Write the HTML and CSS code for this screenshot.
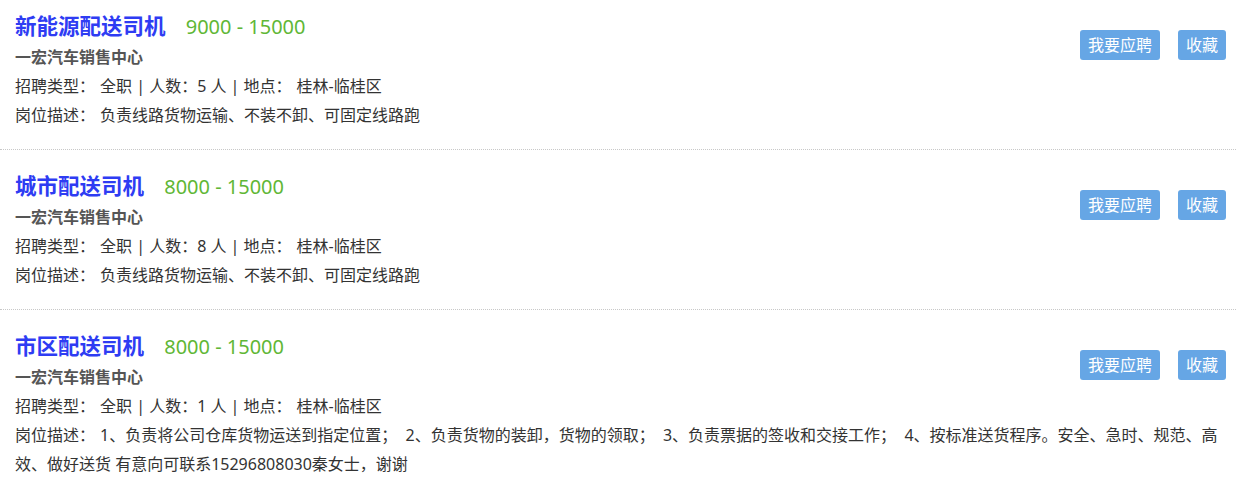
FILE: index.html
```html
<!DOCTYPE html>
<html lang="zh-CN">
<head>
  <meta charset="UTF-8" />
  <title>招聘信息</title>
  <link rel="stylesheet" href="styles.css">
</head>
<body>

  <div class="job-list">

    <!-- 新能源配送司机 -->
    <div class="job">
      <div class="actions">
        <button class="btn">我要应聘</button>
        <button class="btn">收藏</button>
      </div>
      <div class="title-line">
        <span class="job-name">新能源配送司机</span>
        <span class="salary">9000 - 15000</span>
      </div>
      <div class="company">一宏汽车销售中心</div>
      <div class="meta"><span class="label">招聘类型：</span>全职 | 人数：5 人 | 地点：<span class="place">桂林-临桂区</span></div>
      <div class="meta"><span class="label">岗位描述：</span>负责线路货物运输、不装不卸、可固定线路跑</div>
    </div>

    <!-- 城市配送司机 -->
    <div class="job">
      <div class="actions">
        <button class="btn">我要应聘</button>
        <button class="btn">收藏</button>
      </div>
      <div class="title-line">
        <span class="job-name">城市配送司机</span>
        <span class="salary">8000 - 15000</span>
      </div>
      <div class="company">一宏汽车销售中心</div>
      <div class="meta"><span class="label">招聘类型：</span>全职 | 人数：8 人 | 地点：<span class="place">桂林-临桂区</span></div>
      <div class="meta"><span class="label">岗位描述：</span>负责线路货物运输、不装不卸、可固定线路跑</div>
    </div>

    <!-- 市区配送司机 -->
    <div class="job">
      <div class="actions">
        <button class="btn">我要应聘</button>
        <button class="btn">收藏</button>
      </div>
      <div class="title-line">
        <span class="job-name">市区配送司机</span>
        <span class="salary">8000 - 15000</span>
      </div>
      <div class="company">一宏汽车销售中心</div>
      <div class="meta"><span class="label">招聘类型：</span>全职 | 人数：1 人 | 地点：<span class="place">桂林-临桂区</span></div>
      <div class="meta"><span class="label">岗位描述：</span>1、负责将公司仓库货物运送到指定位置；&nbsp; 2、负责货物的装卸，货物的领取；&nbsp; 3、负责票据的签收和交接工作；&nbsp; 4、按标准送货程序。安全、急时、规范、高效、做好送货 有意向可联系15296808030秦女士，谢谢</div>
    </div>

  </div>

</body>
</html>
```

FILE: styles.css
```css
body {
  margin: 0;
  background: #fff;
  font-family: "Noto Sans", "Noto Sans CJK SC", sans-serif;
  color: #333;
  overflow: hidden;
}
.job-list {
  margin-top: -10px;
}
.job {
  padding: 22px 10px 19px 15px;
  border-bottom: 1px dotted #c8c8c8;
}
.actions {
  float: right;
  display: flex;
  gap: 18px;
  margin-top: 18px;
}
.btn {
  height: 30px;
  padding: 0 8px;
  border: none;
  border-radius: 3px;
  background: #66a6e5;
  color: #fff;
  font-family: inherit;
  font-size: 16px;
  line-height: 30px;
}
.title-line {
  height: 30px;
  line-height: 28px;
}
.job-name {
  font-size: 21.5px;
  font-weight: bold;
  color: #2e3cf3;
}
.salary {
  margin-left: 16px;
  font-size: 20px;
  color: #5fb736;
}
.company {
  line-height: 30px;
  font-size: 16px;
  font-weight: bold;
  color: #555;
}
.meta {
  line-height: 29px;
  font-size: 16px;
}
.label {
  margin-right: 5px;
}
.place {
  margin-left: 5px;
}
```
